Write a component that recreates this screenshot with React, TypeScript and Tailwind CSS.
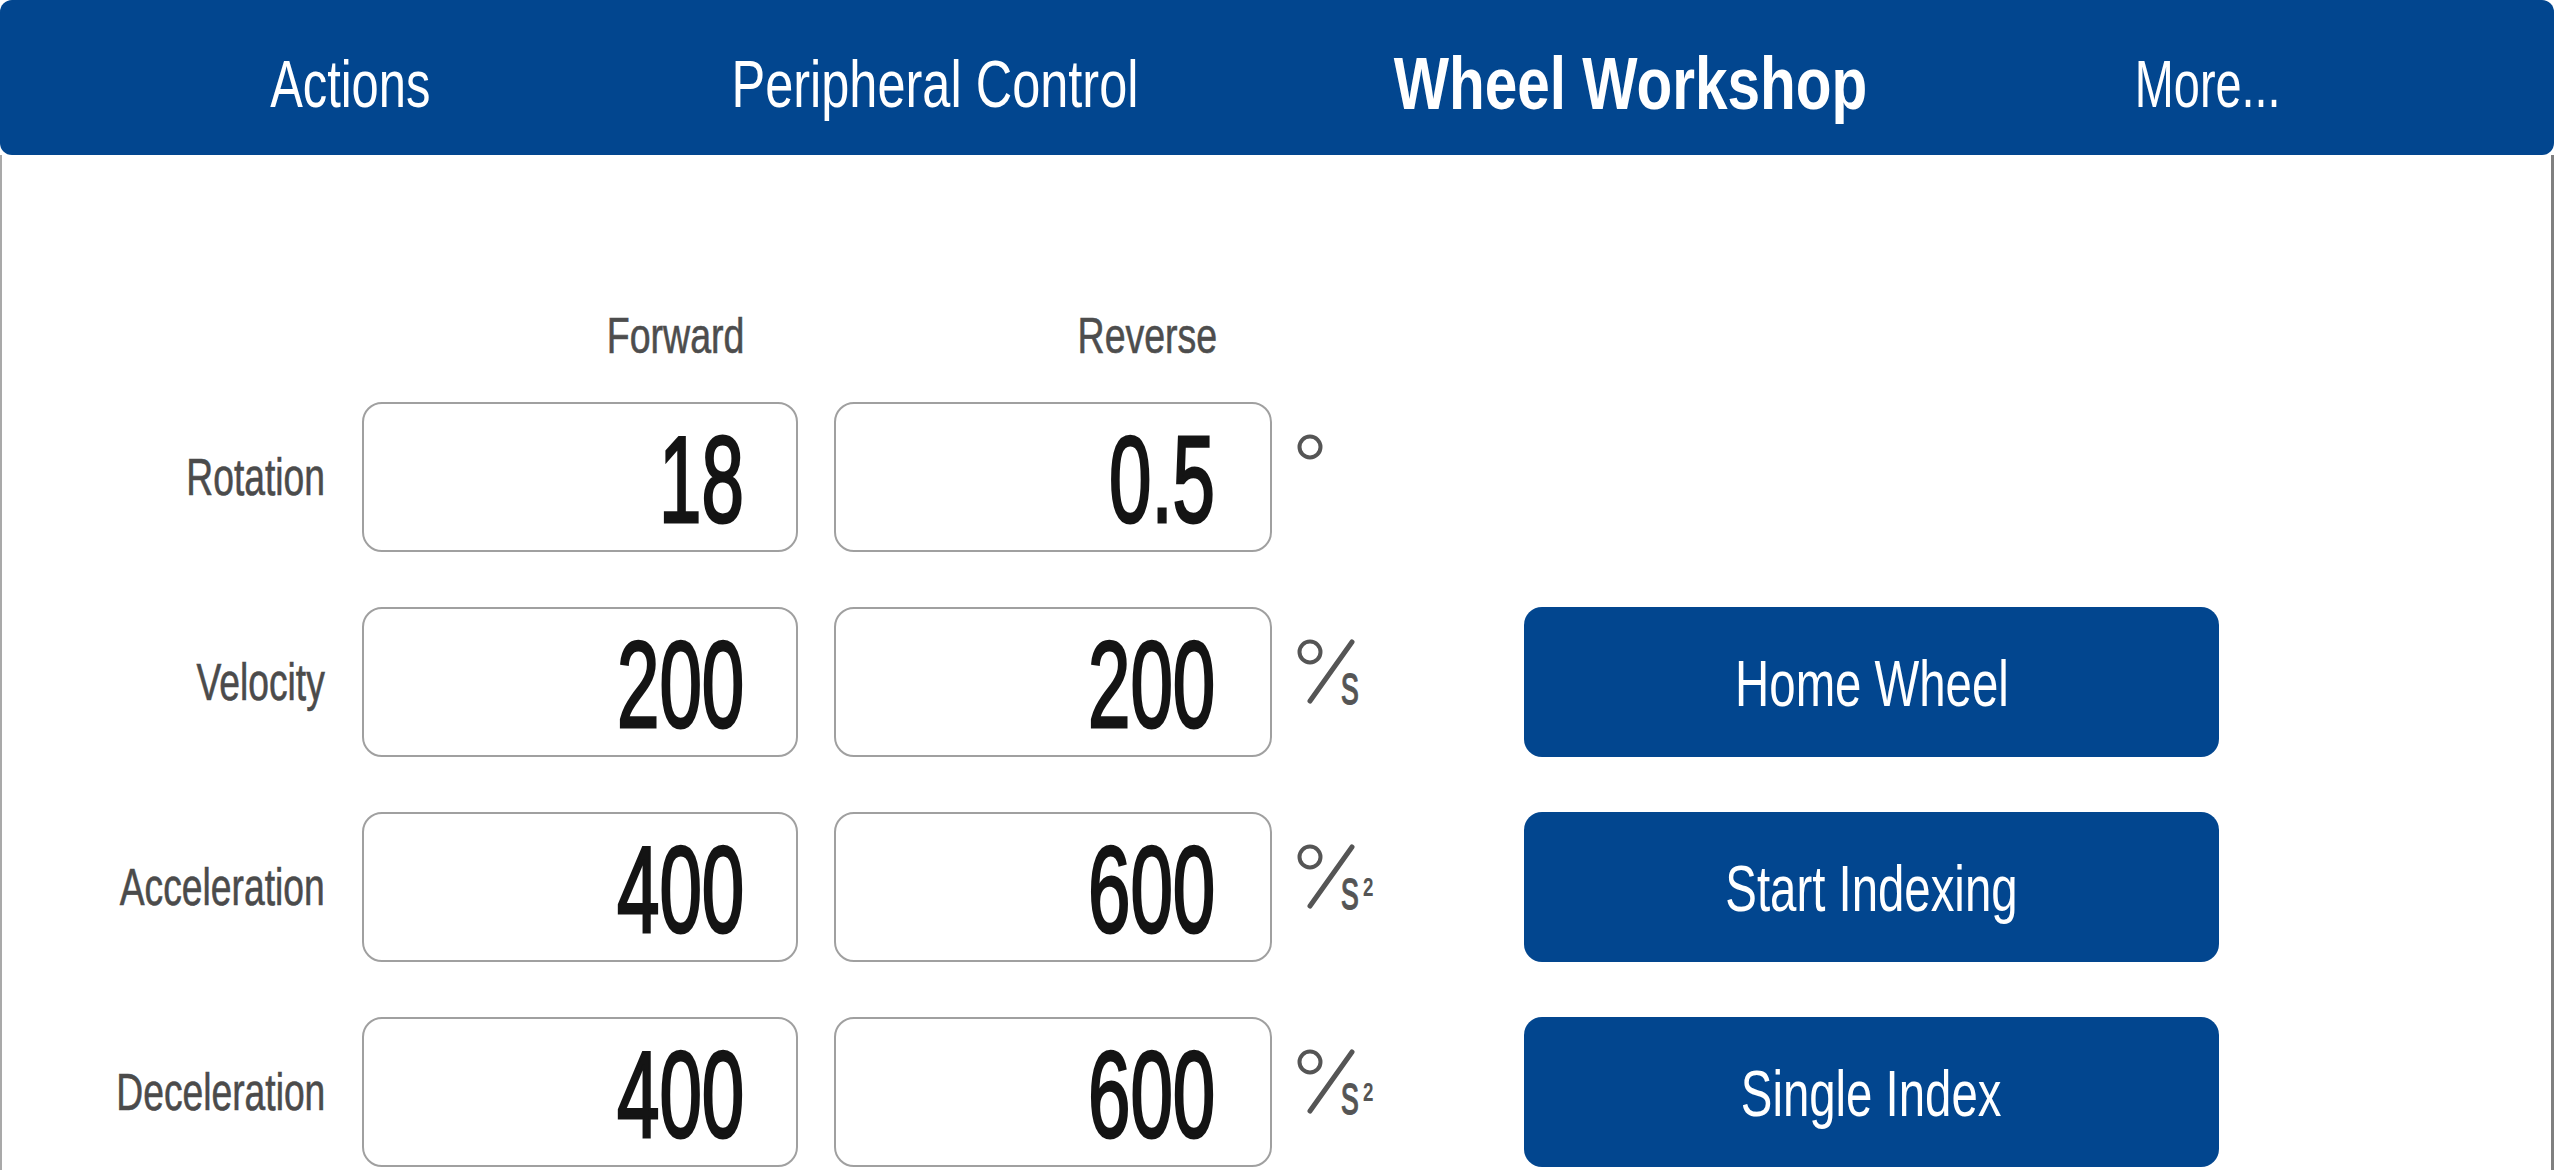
import React from "react";

const BLUE = "bg-[#02468f]";

function Unit({ kind }: { kind: "deg" | "dps" | "dps2" }) {
  return (
    <div className="relative mt-[30px] w-[90px] h-[80px]">
      <svg width="90" height="80" viewBox="0 0 90 80" className="block">
        <circle cx="13" cy="15" r="10.5" fill="none" stroke="#555555" strokeWidth="4" />
        {kind !== "deg" && (
          <line x1="55" y1="5" x2="13" y2="64" stroke="#555555" strokeWidth="5" strokeLinecap="round" />
        )}
      </svg>
      {kind !== "deg" && (
        <span className="absolute left-[44px] top-[18px] inline-block origin-left scale-x-[0.62] text-[58px] leading-none text-[#555555] [-webkit-text-stroke:1px_#555555]">
          s
        </span>
      )}
      {kind === "dps2" && (
        <span className="absolute left-[66px] top-[33px] inline-block origin-left scale-x-[0.75] text-[25px] leading-none font-bold text-[#555555]">
          2
        </span>
      )}
    </div>
  );
}

function ValueBox({ value, width, pr }: { value: string; width: string; pr: string }) {
  return (
    <div
      className={`${width} h-[150px] shrink-0 rounded-[20px] border-2 border-[#a0a0a0] bg-white flex items-center justify-end pt-[4px] ${pr}`}
    >
      <span className="inline-block origin-right scale-x-[0.62] text-[123px] leading-none text-[#141414] [-webkit-text-stroke:3px_#141414]">
        {value}
      </span>
    </div>
  );
}

function ActionButton({ label }: { label: string }) {
  return (
    <button className={`w-[695px] h-[150px] shrink-0 rounded-[18px] ${BLUE} flex items-center justify-center pt-[4px]`}>
      <span className="inline-block scale-x-[0.74] text-[64px] leading-none text-white">{label}</span>
    </button>
  );
}

type Row = {
  label: string;
  fwd: string;
  rev: string;
  unit: "deg" | "dps" | "dps2";
  button?: string;
};

const rows: Row[] = [
  { label: "Rotation", fwd: "18", rev: "0.5", unit: "deg" },
  { label: "Velocity", fwd: "200", rev: "200", unit: "dps", button: "Home Wheel" },
  { label: "Acceleration", fwd: "400", rev: "600", unit: "dps2", button: "Start Indexing" },
  { label: "Deceleration", fwd: "400", rev: "600", unit: "dps2", button: "Single Index" },
];

export default function App() {
  return (
    <div className="w-[2554px] h-[1170px] bg-white flex flex-col overflow-hidden font-['Liberation_Sans',Arial,sans-serif]">
      <nav
        className={`h-[155px] shrink-0 ${BLUE} rounded-[12px] grid grid-cols-[700px_470px_920px_236px_1fr] items-center pt-[12px] text-white`}
      >
        <div className="flex justify-center">
          <span className="inline-block scale-x-[0.74] text-[66px] leading-none">Actions</span>
        </div>
        <div className="flex justify-center">
          <span className="inline-block scale-x-[0.765] text-[66px] leading-none whitespace-nowrap">Peripheral Control</span>
        </div>
        <div className="flex justify-center">
          <span className="inline-block scale-x-[0.78] text-[75px] leading-none font-bold whitespace-nowrap">Wheel Workshop</span>
        </div>
        <div className="flex justify-center">
          <span className="inline-block scale-x-[0.71] text-[66px] leading-none">More...</span>
        </div>
        <div />
      </nav>

      <main className="flex-1 border-l-2 border-r-[3px] border-l-[#a9a9a9] border-r-[#808080] pt-[156px]">
        <div className="flex h-[50px] items-center">
          <div className="w-[323px] shrink-0" />
          <div className="ml-[37px] w-[436px] shrink-0 text-right pr-[54px]">
            <span className="inline-block origin-right scale-x-[0.75] text-[50px] leading-none text-[#4d4d4d] [-webkit-text-stroke:0.6px_#4d4d4d]">Forward</span>
          </div>
          <div className="ml-[36px] w-[438px] shrink-0 text-right pr-[55px]">
            <span className="inline-block origin-right scale-x-[0.75] text-[50px] leading-none text-[#4d4d4d] [-webkit-text-stroke:0.6px_#4d4d4d]">Reverse</span>
          </div>
        </div>

        <div className="mt-[41px] flex flex-col gap-[55px]">
          {rows.map((r) => (
            <div key={r.label} className="flex h-[150px] items-stretch">
              <div className="w-[323px] shrink-0 flex items-center justify-end">
                <span className="inline-block origin-right scale-x-[0.73] text-[51px] leading-none text-[#4b4b4b] whitespace-nowrap [-webkit-text-stroke:0.6px_#4b4b4b]">
                  {r.label}
                </span>
              </div>
              <div className="ml-[37px] flex">
                <ValueBox value={r.fwd} width="w-[436px]" pr="pr-[52px]" />
              </div>
              <div className="ml-[36px] flex">
                <ValueBox value={r.rev} width="w-[438px]" pr="pr-[55px]" />
              </div>
              <div className="ml-[25px] w-[227px] shrink-0">
                <Unit kind={r.unit} />
              </div>
              {r.button ? <ActionButton label={r.button} /> : <div className="w-[695px] shrink-0" />}
            </div>
          ))}
        </div>
      </main>
    </div>
  );
}
